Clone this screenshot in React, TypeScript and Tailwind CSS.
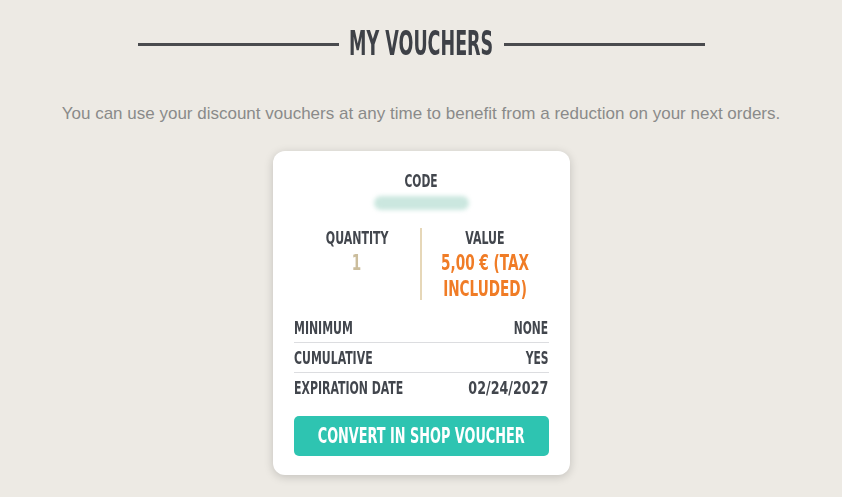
import type { ReactNode } from "react";

// Bold condensed face, squeezed horizontally to get the tall poster-lettering look
const condensed = "font-['DejaVu_Sans_Condensed','DejaVu_Sans',sans-serif] font-bold uppercase";

function Squeeze({ children, className = "" }: { children: ReactNode; className?: string }) {
  return <span className={`inline-block whitespace-nowrap ${className}`}>{children}</span>;
}

function DetailRow({
  label,
  value,
  valueScale = "scale-x-[0.7]",
  last,
}: {
  label: string;
  value: string;
  valueScale?: string;
  last?: boolean;
}) {
  return (
    <div
      className={`flex items-center justify-between h-[30px] text-[17px] leading-[20px] text-[#42464d] ${condensed} ${
        last ? "" : "border-b border-[#dcdde0]"
      }`}
    >
      <Squeeze className="scale-x-[0.715] origin-left">{label}</Squeeze>
      <Squeeze className={`${valueScale} origin-right`}>{value}</Squeeze>
    </div>
  );
}

function Stat({ label, children }: { label: string; children: ReactNode }) {
  return (
    <div className="flex-1 flex flex-col items-center">
      <div className={`text-[18px] leading-[20px] text-[#42464d] ${condensed}`}>
        <Squeeze className="scale-x-[0.68] origin-center">{label}</Squeeze>
      </div>
      {children}
    </div>
  );
}

export default function App() {
  return (
    <div className="w-[842px] h-[497px] bg-[#edeae4] overflow-hidden font-['Liberation_Sans',Arial,sans-serif]">
      <div className="flex items-center justify-center gap-[13px] pt-[27px]">
        <div className="w-[201px] h-[3px] bg-[#4a4b4e]" />
        <h1 className={`w-[139px] flex justify-center text-[33px] leading-[34px] text-[#3e4147] ${condensed}`}>
          <Squeeze className="scale-x-[0.59] origin-center">My Vouchers</Squeeze>
        </h1>
        <div className="w-[201px] h-[3px] bg-[#4a4b4e]" />
      </div>

      <p className="mt-[43px] text-center text-[17px] leading-[20px] text-[#8a8a8a]">
        You can use your discount vouchers at any time to benefit from a reduction on your next orders.
      </p>

      <div className="mx-auto mt-[27px] w-[297px] bg-white rounded-[12px] shadow-[0_2px_10px_rgba(0,0,0,0.18)] px-[21px] pt-[20px] pb-[19px]">
        <div className="flex flex-col items-center">
          <div className={`text-[18px] leading-[20px] text-[#42464d] ${condensed}`}>
            <Squeeze className="scale-x-[0.66] origin-center">Code</Squeeze>
          </div>
          <div className="mt-[5px] w-[95px] h-[14px] rounded-full bg-[#cbe7df] blur-[2px]" />
        </div>

        <div className="flex mt-[18px] h-[72px]">
          <Stat label="Quantity">
            <div className={`mt-[2px] text-[21px] leading-[26px] text-[#cbbd9c] ${condensed}`}>
              <Squeeze className="scale-x-[0.72] origin-center">1</Squeeze>
            </div>
          </Stat>
          <div className="w-[2px] bg-[#e6d7b8]" />
          <Stat label="Value">
            <div className={`mt-[2px] text-[21px] leading-[26px] text-[#f07c26] text-center ${condensed}`}>
              <Squeeze className="scale-x-[0.72] origin-center">
                5,00 € (Tax
                <br />
                included)
              </Squeeze>
            </div>
          </Stat>
        </div>

        <div className="mt-[13px]">
          <DetailRow label="Minimum" value="None" />
          <DetailRow label="Cumulative" value="Yes" />
          <DetailRow label="Expiration date" value="02/24/2027" valueScale="scale-x-[0.83]" last />
        </div>

        <button
          className={`mt-[13px] w-full h-[40px] flex items-center justify-center rounded-[5px] bg-[#2ec4b1] text-white text-[21px] leading-[24px] ${condensed}`}
        >
          <Squeeze className="scale-x-[0.68] origin-center">Convert in shop voucher</Squeeze>
        </button>
      </div>
    </div>
  );
}
